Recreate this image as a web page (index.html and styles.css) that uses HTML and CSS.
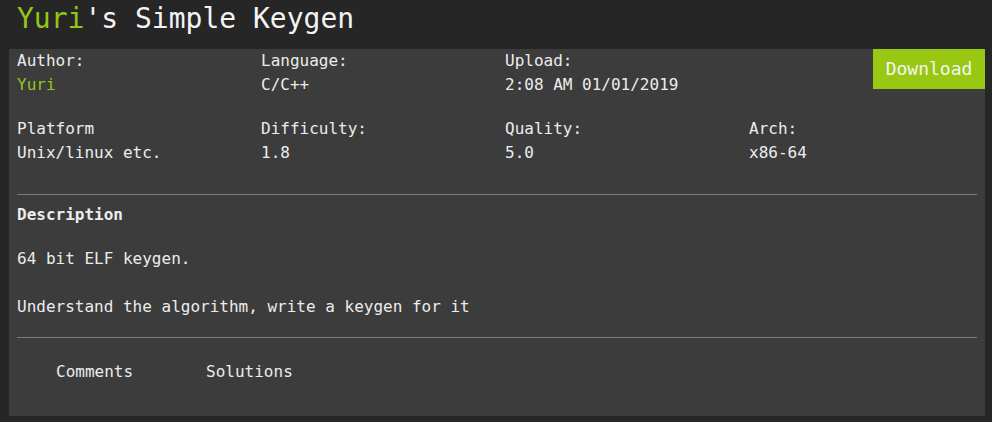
FILE: index.html
```html
<!DOCTYPE html>
<html>
<head>
<meta charset="utf-8">
<link rel="stylesheet" href="styles.css">
</head>
<body>
<h1 class="title"><span class="accent">Yuri</span>'s Simple Keygen</h1>
<div class="panel">
  <a class="download" href="#">Download</a>
  <div class="meta">
    <div class="cell"><div>Author:</div><div class="accent">Yuri</div></div>
    <div class="cell"><div>Language:</div><div>C/C++</div></div>
    <div class="cell"><div>Upload:</div><div>2:08 AM 01/01/2019</div></div>
    <div class="cell"></div>
  </div>
  <div class="meta meta-second">
    <div class="cell"><div>Platform</div><div>Unix/linux etc.</div></div>
    <div class="cell"><div>Difficulty:</div><div>1.8</div></div>
    <div class="cell"><div>Quality:</div><div>5.0</div></div>
    <div class="cell"><div>Arch:</div><div>x86-64</div></div>
  </div>
  <hr class="rule rule-top">
  <div class="desc">
    <div class="desc-head">Description</div>
    <p class="desc-line first">64 bit ELF keygen.</p>
    <p class="desc-line">Understand the algorithm, write a keygen for it</p>
  </div>
  <hr class="rule rule-bottom">
  <div class="tabs">
    <span class="tab">Comments</span>
    <span class="tab">Solutions</span>
  </div>
</div>
</body>
</html>
```

FILE: styles.css
```css
html, body {
  margin: 0;
  padding: 0;
}
body {
  background: #262626;
  color: #ececec;
  font-family: "DejaVu Sans Mono", "Liberation Mono", monospace;
  font-size: 16px;
  line-height: 24px;
  height: 422px;
  overflow: hidden;
}
.accent {
  color: #95c51a;
}
.title {
  margin: 0;
  padding: 0 0 0 17px;
  font-size: 28px;
  font-weight: normal;
  line-height: 38px;
  height: 49px;
  color: #f4f4f4;
}
.panel {
  position: relative;
  margin: 0 7px 0 9px;
  background: #3c3c3c;
  padding-bottom: 32px;
}
.download {
  position: absolute;
  top: 0;
  right: 0;
  width: 112px;
  height: 40px;
  background: #99c813;
  color: #f4f4f4;
  font-size: 18px;
  line-height: 40px;
  text-align: center;
  text-decoration: none;
}
.meta {
  display: grid;
  grid-template-columns: repeat(4, 1fr);
}
.meta-second {
  margin-top: 20px;
}
.cell {
  padding: 0 8px;
}
.rule {
  border: 0;
  border-top: 1px solid #7b7b7b;
  margin: 0 8px;
}
.rule-top {
  margin-top: 29px;
}
.desc {
  padding: 8px 8px 0;
}
.desc-head {
  font-weight: bold;
}
.desc-line {
  margin: 20px 0 0;
}
.desc-line + .desc-line {
  margin-top: 24px;
}
.rule-bottom {
  margin-top: 18px;
}
.tabs {
  display: flex;
  padding: 22px 0 0 47px;
  gap: 73px;
}
```
